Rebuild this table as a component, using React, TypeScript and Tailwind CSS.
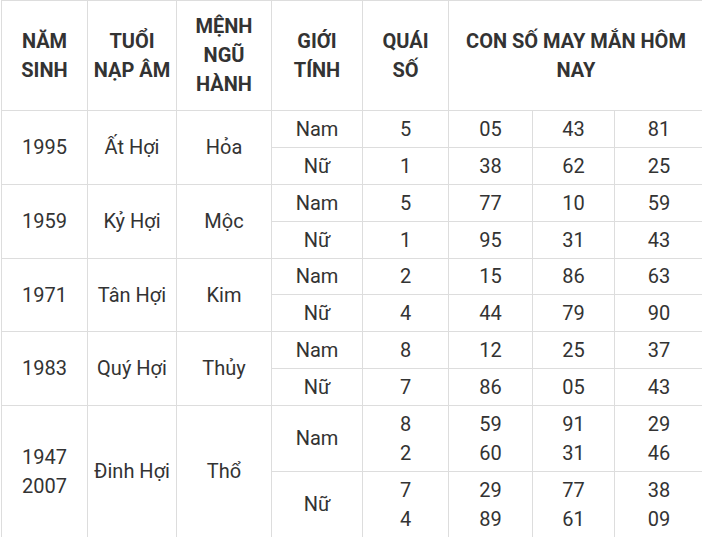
import React from "react";

type Group = {
  year: string[];
  tuoi: string;
  menh: string;
  rows: { sex: string; quai: string[]; nums: string[][]; h: string }[];
};

const groups: Group[] = [
  {
    year: ["1995"],
    tuoi: "Ất Hợi",
    menh: "Hỏa",
    rows: [
      { sex: "Nam", quai: ["5"], nums: [["05"], ["43"], ["81"]], h: "h-[37px]" },
      { sex: "Nữ", quai: ["1"], nums: [["38"], ["62"], ["25"]], h: "h-[37px]" },
    ],
  },
  {
    year: ["1959"],
    tuoi: "Kỷ Hợi",
    menh: "Mộc",
    rows: [
      { sex: "Nam", quai: ["5"], nums: [["77"], ["10"], ["59"]], h: "h-[37px]" },
      { sex: "Nữ", quai: ["1"], nums: [["95"], ["31"], ["43"]], h: "h-[37px]" },
    ],
  },
  {
    year: ["1971"],
    tuoi: "Tân Hợi",
    menh: "Kim",
    rows: [
      { sex: "Nam", quai: ["2"], nums: [["15"], ["86"], ["63"]], h: "h-[36px]" },
      { sex: "Nữ", quai: ["4"], nums: [["44"], ["79"], ["90"]], h: "h-[37px]" },
    ],
  },
  {
    year: ["1983"],
    tuoi: "Quý Hợi",
    menh: "Thủy",
    rows: [
      { sex: "Nam", quai: ["8"], nums: [["12"], ["25"], ["37"]], h: "h-[37px]" },
      { sex: "Nữ", quai: ["7"], nums: [["86"], ["05"], ["43"]], h: "h-[37px]" },
    ],
  },
  {
    year: ["1947", "2007"],
    tuoi: "Đinh Hợi",
    menh: "Thổ",
    rows: [
      { sex: "Nam", quai: ["8", "2"], nums: [["59", "60"], ["91", "31"], ["29", "46"]], h: "h-[66px]" },
      { sex: "Nữ", quai: ["7", "4"], nums: [["29", "89"], ["77", "61"], ["38", "09"]], h: "h-[66px]" },
    ],
  },
];

const cell = "border border-[#dddddd] text-center align-middle px-0 py-0 leading-[29px]";

const Lines = ({ items }: { items: string[] }) => (
  <>
    {items.map((t, i) => (
      <div key={i}>{t}</div>
    ))}
  </>
);

const App = () => {
  return (
    <div className="w-[702px] h-[537px] overflow-hidden bg-white">
      <table
        className="ml-[1px] table-fixed border-collapse w-[702px] text-[20px] text-[#333333]"
        style={{ fontFamily: "Roboto, 'Liberation Sans', sans-serif" }}
      >
        <colgroup>
          <col className="w-[86px]" />
          <col className="w-[89px]" />
          <col className="w-[95px]" />
          <col className="w-[91px]" />
          <col className="w-[86px]" />
          <col className="w-[84px]" />
          <col className="w-[82px]" />
          <col className="w-[89px]" />
        </colgroup>
        <thead>
          <tr className="h-[110px] font-bold">
            <th className={cell}>NĂM<br />SINH</th>
            <th className={cell}>TUỔI<br />NẠP ÂM</th>
            <th className={cell}>MỆNH<br />NGŨ<br />HÀNH</th>
            <th className={cell}>GIỚI<br />TÍNH</th>
            <th className={cell}>QUÁI<br />SỐ</th>
            <th className={`${cell} px-2`} colSpan={3}>CON SỐ MAY MẮN HÔM NAY</th>
          </tr>
        </thead>
        <tbody>
          {groups.map((g) =>
            g.rows.map((r, i) => (
              <tr key={g.tuoi + r.sex} className={r.h}>
                {i === 0 && (
                  <>
                    <td className={cell} rowSpan={2}>
                      <Lines items={g.year} />
                    </td>
                    <td className={cell} rowSpan={2}>{g.tuoi}</td>
                    <td className={cell} rowSpan={2}>{g.menh}</td>
                  </>
                )}
                <td className={cell}>{r.sex}</td>
                <td className={cell}>
                  <Lines items={r.quai} />
                </td>
                {r.nums.map((n, k) => (
                  <td key={k} className={cell}>
                    <Lines items={n} />
                  </td>
                ))}
              </tr>
            ))
          )}
        </tbody>
      </table>
    </div>
  );
};

export default App;
